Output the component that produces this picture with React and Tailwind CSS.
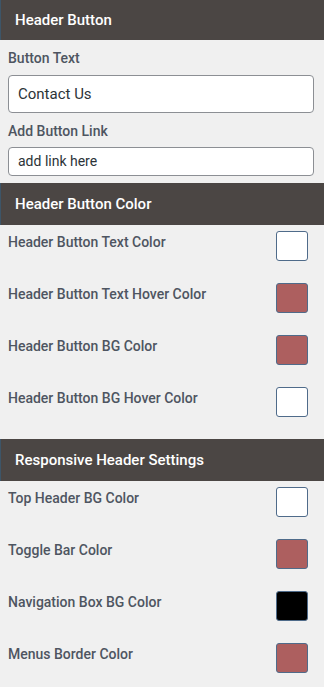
// Header settings panel
const buttonColors = [
  { label: "Header Button Text Color", color: "bg-white" },
  { label: "Header Button Text Hover Color", color: "bg-[#ad5f5f]" },
  { label: "Header Button BG Color", color: "bg-[#ad5f5f]" },
  { label: "Header Button BG Hover Color", color: "bg-white" },
];

const responsiveColors = [
  { label: "Top Header BG Color", color: "bg-white" },
  { label: "Toggle Bar Color", color: "bg-[#ad5f5f]" },
  { label: "Navigation Box BG Color", color: "bg-black" },
  { label: "Menus Border Color", color: "bg-[#ad5f5f]" },
];

function SectionTitle({ title, tall }) {
  return (
    <div
      className={`flex items-center bg-[#4b4644] border-l border-[#3d5568] pl-[14px] text-[15px] font-medium text-white ${
        tall ? "h-[42px]" : "h-[40px]"
      }`}
    >
      {title}
    </div>
  );
}

function ColorRow({ label, color }) {
  return (
    <div className="flex items-start justify-between pl-2 pr-4">
      <span className="pt-[1px] text-[14px] leading-5 font-medium text-[#4e5561]">
        {label}
      </span>
      <div
        className={`h-[30px] w-[32px] rounded-[3px] border border-[#4f6b8a] ${color}`}
      />
    </div>
  );
}

export default function App() {
  return (
    <div
      className="h-[687px] w-[324px] overflow-hidden bg-[#f0f0f0]"
      style={{ fontFamily: "Roboto, 'Liberation Sans', sans-serif" }}
    >
      <SectionTitle title="Header Button" />
      <div className="flex flex-col px-2 pt-2 pb-[7px]">
        <label className="text-[14px] leading-5 font-medium text-[#4e5561]">
          Button Text
        </label>
        <div className="mt-[7px] flex h-[38px] w-[306px] items-center rounded-[4px] border border-[#8c8f94] bg-white pl-[9px] text-[15px] text-[#2c3338]">
          Contact Us
        </div>
        <label className="mt-2 text-[14px] leading-5 font-medium text-[#4e5561]">
          Add Button Link
        </label>
        <div className="mt-[6px] flex h-[29px] w-[306px] items-center rounded-[4px] border border-[#8c8f94] bg-white pl-[9px] text-[14px] text-[#2c3338]">
          add link here
        </div>
      </div>

      <SectionTitle title="Header Button Color" tall />
      <div className="flex flex-col gap-[22px] pt-[6px] pb-[22px]">
        {buttonColors.map((row) => (
          <ColorRow key={row.label} {...row} />
        ))}
      </div>

      <SectionTitle title="Responsive Header Settings" tall />
      <div className="flex flex-col gap-[22px] pt-[6px]">
        {responsiveColors.map((row) => (
          <ColorRow key={row.label} {...row} />
        ))}
      </div>
    </div>
  );
}
